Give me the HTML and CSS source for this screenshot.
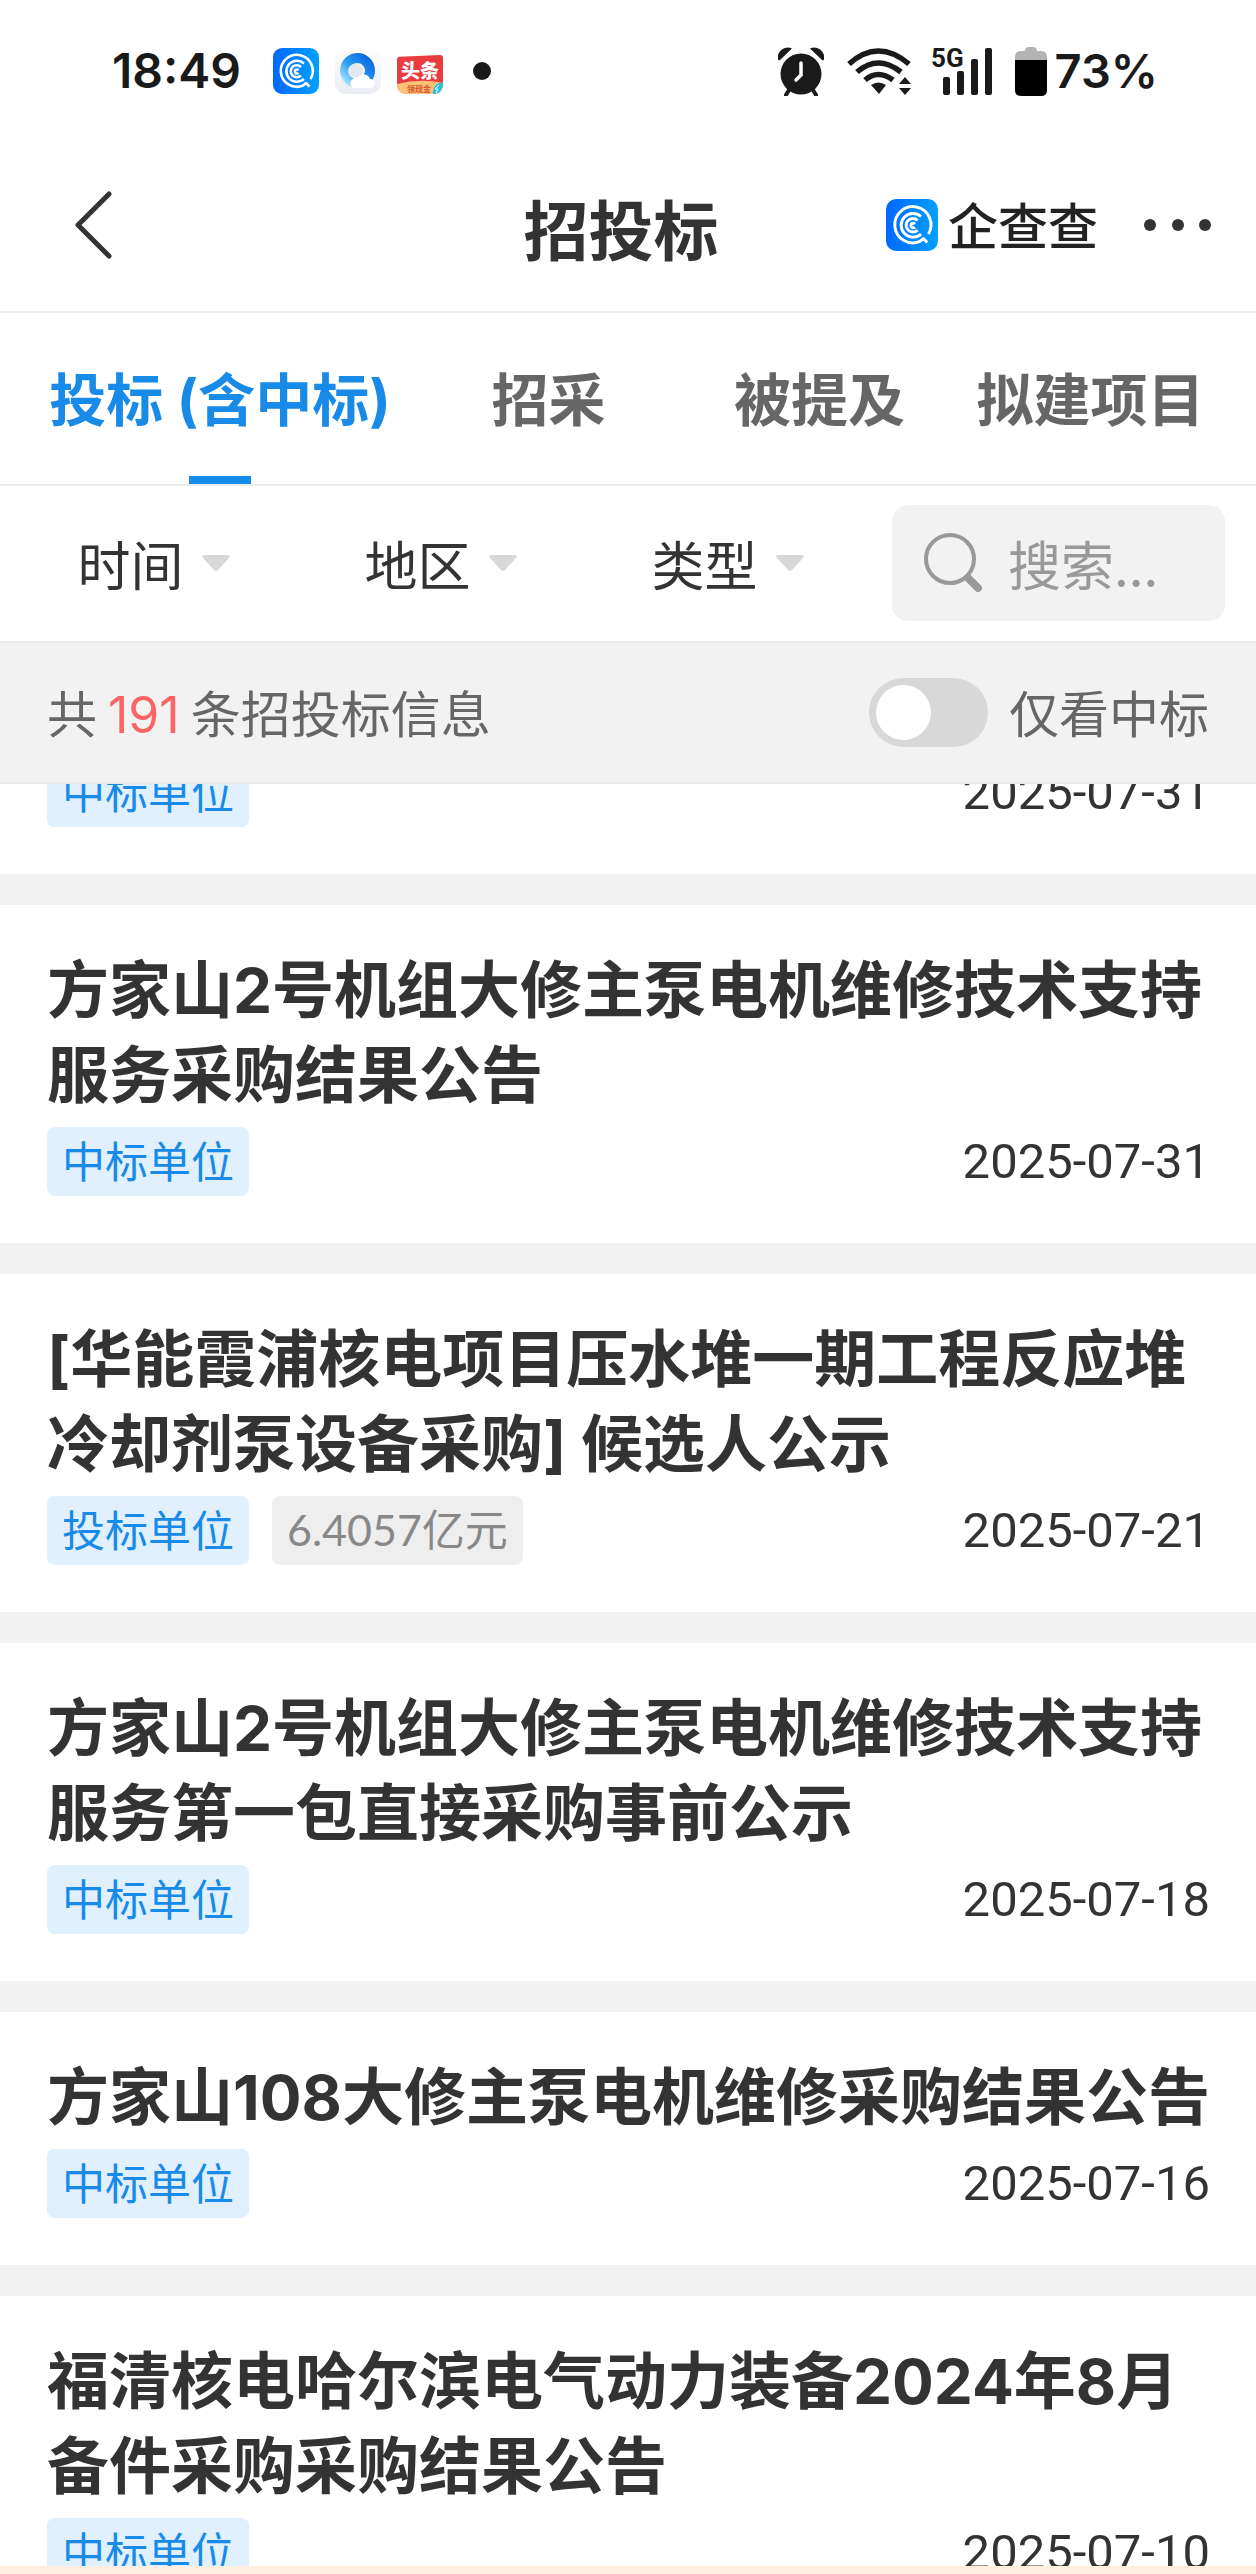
FILE: index.html
```html
<!DOCTYPE html>
<html lang="zh-CN">
<head>
<meta charset="utf-8">
<meta name="viewport" content="width=device-width, initial-scale=1">
<title>招投标</title>
<link rel="stylesheet" href="styles.css">
</head>
<body>
<svg width="0" height="0" class="defs" aria-hidden="true">
  <defs>
    <linearGradient id="blue" x1="0" y1="0" x2="1" y2="0"><stop offset="0" stop-color="#0068ff"/><stop offset="1" stop-color="#00a0ff"/></linearGradient>
    <linearGradient id="ring" x1="1" y1="0" x2="0" y2="1"><stop offset="0" stop-color="#0b66e0"/><stop offset=".55" stop-color="#2a9df2"/><stop offset="1" stop-color="#a8e4ff"/></linearGradient>
    <linearGradient id="tile" x1="0" y1="0" x2="0" y2="1"><stop offset="0" stop-color="#fdfdfe"/><stop offset="1" stop-color="#e9edf3"/></linearGradient>
    <symbol id="qcc" viewBox="0 0 46 46">
      <rect width="46" height="46" rx="9" fill="url(#blue)"/>
      <g fill="none" stroke="#fff" stroke-width="2.6">
        <path d="M37.500 31A16 16 0 1 0 30 37.500L33 35L36.500 38.500" stroke-linejoin="round"/>
        <path d="M31 15.500A10.500 10.500 0 1 0 31 31"/>
        <path d="M28 19A6 6 0 1 0 28 27.500"/>
        <path d="M25.500 22.200A2 2 0 1 0 25.500 24.800"/>
      </g>
    </symbol>
  </defs>
</svg>
<div class="app">
  <div class="status">
    <div class="status-left">
      <span class="clock">18:49</span>
      <svg class="app-icon" viewBox="0 0 46 46"><use href="#qcc"/></svg>
      <svg class="app-icon" viewBox="0 0 46 46">
        <rect width="46" height="46" rx="11" fill="url(#tile)"/>
        <circle cx="22.500" cy="22.500" r="12.500" fill="none" stroke="url(#ring)" stroke-width="10"/>
        <circle cx="20.500" cy="23" r="7.500" fill="#e4e8f0"/>
        <path d="M18 40a5 5 0 0 1 0-9a5 5 0 0 1 5-2a7 7 0 0 1 12 2a4.500 4.500 0 0 1 0 9z" fill="#fff"/>
      </svg>
      <svg class="app-icon" viewBox="0 0 46 46">
        <path d="M0 11Q0 9 3 8.700L43 7Q46 7 46 10V35Q46 46 36 46H11Q0 46 0 35z" fill="#ea3b40"/>
        <path d="M0 36Q23 30 46 35Q46 46 36 46H11Q0 46 0 36z" fill="#ffc173"/>
        <path d="M36 46Q35 36 46 34Q46 46 36 46z" fill="#20c4dc"/>
        <path d="M42 37l-4 4h3l-2 4" stroke="#fff" fill="none"/>
        <text class="news" x="4" y="30">头条</text>
        <text class="news-sub" x="10" y="44">领现金</text>
      </svg>
      <svg class="dot" viewBox="0 0 18 18"><circle cx="9" cy="9" r="9" fill="#1a1a1a"/></svg>
    </div>
    <div class="status-right">
      <svg width="48" height="50" viewBox="0 0 48 50" fill="#1a1a1a">
        <circle cx="24" cy="28" r="20.500"/>
        <path d="M1 13A10 10 0 0 1 15 2.500L3 14Q1 15 1 13zM47 13A10 10 0 0 0 33 2.500L45 14Q47 15 47 13z"/>
        <path d="M12 44l-3 5M36 44l3 5" stroke="#1a1a1a" stroke-width="4" stroke-linecap="round"/>
        <path d="M24 17V29L19 34" fill="none" stroke="#fff" stroke-width="3.500" stroke-linecap="round"/>
      </svg>
      <svg width="65" height="48" viewBox="0 0 65 48">
        <g fill="none" stroke="#1a1a1a" stroke-width="5.500">
          <path d="M2 17Q31 -9 62 17"/><path d="M10 25Q31 7 54 25"/><path d="M18 33Q31 22 46 33"/>
        </g>
        <path d="M24 38Q31 33 39 38L32 47z" fill="#1a1a1a"/>
        <path d="M52 37l6-7 6 7zM52 41l6 7 6-7z" fill="#1a1a1a"/>
      </svg>
      <svg class="signal" width="62" height="48" viewBox="0 0 62 48" fill="#1a1a1a">
        <text class="net" x="0" y="20">5G</text>
        <rect x="12" y="30" width="7" height="18" rx="2"/><rect x="26" y="24" width="7" height="24" rx="2"/><rect x="40" y="12" width="7" height="36" rx="2"/><rect x="54" y="1" width="7" height="47" rx="2"/>
      </svg>
      <svg width="32" height="49" viewBox="0 0 32 49">
        <path d="M0 13V10Q0 4 6 4H10Q10 0 14 0H18Q22 0 22 4H26Q32 4 32 10V13z" fill="#b3b3b3"/>
        <path d="M0 13H32V43Q32 49 26 49H6Q0 49 0 43z" fill="#000"/>
      </svg>
      <span class="percent">73%</span>
    </div>
  </div>

  <header class="header">
    <button class="back" aria-label="返回"><svg width="40" height="70" viewBox="0 0 40 70"><path d="M35 4L4 35L35 66" fill="none" stroke="#333" stroke-width="5" stroke-linecap="round" stroke-linejoin="round"/></svg></button>
    <h1>招投标</h1>
    <div class="brand">
      <svg width="52" height="52" viewBox="0 0 46 46"><use href="#qcc"/></svg>
      <span class="brand-name">企查查</span>
      <button class="more" aria-label="更多"><svg width="68" height="12" viewBox="0 0 68 12" fill="#333"><circle cx="6" cy="6" r="6"/><circle cx="34" cy="6" r="6"/><circle cx="61" cy="6" r="6"/></svg></button>
    </div>
  </header>

  <nav class="tabs">
    <a href="#bid" class="active">投标 (含中标)</a>
    <a href="#tender">招采</a>
    <a href="#mention">被提及</a>
    <a href="#plan">拟建项目</a>
  </nav>

  <div class="filters">
    <div class="filter-list">
      <button>时间<svg width="28" height="16" viewBox="0 0 28 16"><path d="M2 0H26Q29 0 27 3L16 15Q14 17 12 15L1 3Q-1 0 2 0z"/></svg></button>
      <button>地区<svg width="28" height="16" viewBox="0 0 28 16"><path d="M2 0H26Q29 0 27 3L16 15Q14 17 12 15L1 3Q-1 0 2 0z"/></svg></button>
      <button>类型<svg width="28" height="16" viewBox="0 0 28 16"><path d="M2 0H26Q29 0 27 3L16 15Q14 17 12 15L1 3Q-1 0 2 0z"/></svg></button>
    </div>
    <label class="search">
      <svg width="60" height="60" viewBox="0 0 60 60" fill="none" stroke="#999"><circle cx="26" cy="26" r="24" stroke-width="4"/><path d="M44 45L54 55" stroke-width="8" stroke-linecap="round"/></svg>
      <input type="text" placeholder="搜索..." aria-label="搜索">
    </label>
  </div>

  <div class="summary">
    <p>共<b>191</b>条招投标信息</p>
    <label class="switch"><input type="checkbox"><span>仅看中标</span></label>
  </div>

  <main class="viewport">
    <ul class="list">
      <li class="card partial"><div class="meta"><span class="tag">中标单位</span><time>2025-07-31</time></div></li>
      <li class="card"><h2>方家山2号机组大修主泵电机维修技术支持服务采购结果公告</h2><div class="meta"><span class="tag">中标单位</span><time>2025-07-31</time></div></li>
      <li class="card"><h2>[华能霞浦核电项目压水堆一期工程反应堆冷却剂泵设备采购] 候选人公示</h2><div class="meta"><span class="tag">投标单位</span><span class="tag amount">6.4057亿元</span><time>2025-07-21</time></div></li>
      <li class="card"><h2>方家山2号机组大修主泵电机维修技术支持服务第一包直接采购事前公示</h2><div class="meta"><span class="tag">中标单位</span><time>2025-07-18</time></div></li>
      <li class="card"><h2>方家山108大修主泵电机维修采购结果公告</h2><div class="meta"><span class="tag">中标单位</span><time>2025-07-16</time></div></li>
      <li class="card"><h2>福清核电哈尔滨电气动力装备2024年8月备件采购采购结果公告</h2><div class="meta"><span class="tag">中标单位</span><time>2025-07-10</time></div></li>
    </ul>
  </main>
  <div class="notice-edge"></div>
</div>
</body>
</html>
```
FILE: styles.css
```css
* { box-sizing: border-box; }

body {
  margin: 0;
  background: #fff;
  color: #333;
  font-family: "Noto Sans CJK SC", sans-serif;
}

h1, h2, p, ul { margin: 0; padding: 0; }
ul { list-style: none; }
svg { display: block; flex: none; }
button { border: 0; padding: 0; background: none; color: inherit; font: inherit; }
.defs { position: absolute; }

.app {
  display: flex;
  flex-direction: column;
  height: 100vh;
  overflow: hidden;
}
.app > * { flex: none; }

/* Status bar */
.status {
  display: flex;
  justify-content: space-between;
  align-items: center;
  height: 142px;
  padding: 0 98px 0 112px;
  color: #1a1a1a;
}
.status-left, .status-right { display: flex; align-items: center; }
.status-left { gap: 16px; }
.clock, .percent { font-family: Inter, sans-serif; font-weight: 600; line-height: 60px; }
.clock { width: 145px; font-size: 48px; }
.percent { font-size: 47px; }
.app-icon { width: 46px; height: 46px; }
.dot { width: 18px; height: 18px; margin-left: 14px; }
.news { font-size: 19px; font-weight: 900; fill: #fff; }
.news-sub { font-size: 8px; font-weight: 700; fill: #d5502f; }
.net { font: 700 26px Roboto, sans-serif; }
.status-right { gap: 22px; }
.status-right .percent { margin-left: -14px; }
.signal { margin-left: -3px; overflow: visible; }

/* Title bar */
.header {
  display: grid;
  grid-template-columns: 1fr auto 1fr;
  align-items: center;
  height: 171px;
  padding: 0 44px 0 30px;
  border-bottom: 2px solid #ebebeb;
}
.back { justify-self: start; padding: 0 0 4px 44px; }
.header h1 { font-size: 65px; font-weight: 700; line-height: 96px; }
.brand { display: flex; align-items: center; justify-self: end; gap: 10px; padding-bottom: 4px; }
.brand-name { padding-bottom: 4px; font-size: 50px; font-weight: 500; line-height: 60px; color: #222; }
.more { margin-left: 36px; }

/* Tabs */
.tabs {
  display: grid;
  grid-template-columns: 386fr 271fr 271fr 271fr;
  height: 173px;
  padding: 0 30px 0 27px;
  border-bottom: 2px solid #ebebeb;
}
.tabs a {
  display: flex;
  align-items: center;
  justify-content: center;
  position: relative;
  padding-top: 4px;
  color: #666;
  font-family: Inter, "Noto Sans CJK SC", sans-serif;
  font-size: 57px;
  font-weight: 700;
  line-height: 84px;
  white-space: nowrap;
  text-decoration: none;
}
.tabs .active { color: #188ae8; }
.tabs .active::after {
  content: "";
  position: absolute;
  bottom: 0;
  width: 62px;
  height: 8px;
  background: #188ae8;
}

/* Filters */
.filters {
  display: flex;
  align-items: center;
  height: 157px;
  padding: 0 31px 2px 10px;
  border-bottom: 2px solid #ebebeb;
}
.filter-list { display: grid; grid-template-columns: repeat(3, 1fr); flex: 1; margin-right: 21px; }
.filter-list button { display: flex; align-items: center; justify-content: center; gap: 18px; font-size: 53px; line-height: 78px; }
.filter-list svg { fill: #d8d8d8; }
.search {
  display: flex;
  align-items: center;
  gap: 24px;
  width: 333px;
  height: 116px;
  padding: 0 32px;
  border-radius: 16px;
  background: #f2f2f2;
}
.search input {
  flex: 1;
  min-width: 0;
  padding: 0;
  border: 0;
  outline: 0;
  background: none;
  color: #333;
  font: inherit;
  font-size: 53px;
}
.search input::placeholder { color: #999; opacity: 1; }

/* Result summary */
.summary {
  display: flex;
  align-items: center;
  justify-content: space-between;
  height: 141px;
  padding: 0 47px;
  border-bottom: 2px solid #ebebeb;
  background: #f2f2f2;
  color: #666;
  font-size: 50px;
}
.summary p, .summary span { padding-bottom: 4px; }
.summary b { margin: 0 11px; color: #f96464; font: 400 50px Inter, sans-serif; }
.switch { display: flex; align-items: center; gap: 21px; }
.switch input {
  appearance: none;
  width: 119px;
  height: 69px;
  margin: 0;
  padding: 7px;
  border-radius: 35px;
  background: #d8d8d8;
}
.switch input::before {
  content: "";
  display: block;
  width: 55px;
  height: 55px;
  border-radius: 50%;
  background: #fff;
}
.switch input:checked { background: #188ae8; }
.switch input:checked::before { margin-left: auto; }

/* Results */
.app > .viewport { flex: 1; min-height: 0; overflow: hidden; background: #f2f2f2; }
.list { display: flex; flex-direction: column; gap: 31px; margin-top: -26px; }
.card { padding: 43px 40px 47px 47px; background: #fff; }
.card.partial { padding-top: 0; }
.card h2 {
  margin-bottom: 9px;
  font-family: Inter, "Noto Sans CJK SC", sans-serif;
  font-size: 62px;
  font-weight: 700;
  line-height: 85px;
}
.meta { display: flex; align-items: center; gap: 23px; padding-right: 6px; }
.tag {
  height: 69px;
  padding: 0 15px;
  border-radius: 8px;
  background: #e1f0fe;
  color: #188ae8;
  font-size: 43px;
  line-height: 64px;
}
.tag.amount { background: #eee; color: #888; font-family: Lato, "Noto Sans CJK SC", sans-serif; line-height: 68px; }
.meta time { margin-left: auto; font-family: Roboto, sans-serif; font-size: 49px; line-height: 69px; }

.notice-edge { height: 8px; background: #ffeedd; }
```
